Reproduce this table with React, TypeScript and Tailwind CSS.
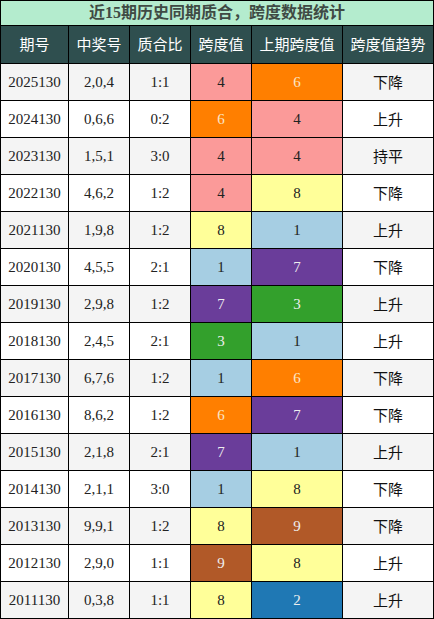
const rows: [string, string, string, number, number, string][] = [
  ["2025130", "2,0,4", "1:1", 4, 6, "下降"],
  ["2024130", "0,6,6", "0:2", 6, 4, "上升"],
  ["2023130", "1,5,1", "3:0", 4, 4, "持平"],
  ["2022130", "4,6,2", "1:2", 4, 8, "下降"],
  ["2021130", "1,9,8", "1:2", 8, 1, "上升"],
  ["2020130", "4,5,5", "2:1", 1, 7, "下降"],
  ["2019130", "2,9,8", "1:2", 7, 3, "上升"],
  ["2018130", "2,4,5", "2:1", 3, 1, "上升"],
  ["2017130", "6,7,6", "1:2", 1, 6, "下降"],
  ["2016130", "8,6,2", "1:2", 6, 7, "下降"],
  ["2015130", "2,1,8", "2:1", 7, 1, "上升"],
  ["2014130", "2,1,1", "3:0", 1, 8, "下降"],
  ["2013130", "9,9,1", "1:2", 8, 9, "下降"],
  ["2012130", "2,9,0", "1:1", 9, 8, "上升"],
  ["2011130", "0,3,8", "1:1", 8, 2, "上升"],
]

// span value -> cell colour + text colour
const spanColor: Record<number, string> = {
  1: "bg-[#a6cee3] text-[#222]",
  2: "bg-[#1f78b4] text-[#eee]",
  3: "bg-[#33a02c] text-[#eee]",
  4: "bg-[#fb9a99] text-[#222]",
  6: "bg-[#ff7f00] text-[#fbe6c8]",
  7: "bg-[#6a3d9a] text-[#eee]",
  8: "bg-[#ffff99] text-[#222]",
  9: "bg-[#b15928] text-[#eee]",
}

const headers = ["期号", "中奖号", "质合比", "跨度值", "上期跨度值", "跨度值趋势"]

const serif = "font-['Liberation_Serif','Noto_Sans_CJK_SC',serif]"
const sans = "font-['Noto_Sans_CJK_SC',sans-serif]"
const cols = "grid grid-cols-[68px_61px_61px_61px_91px_91px]"
const cell = "flex items-center justify-center border-r border-b border-black"

export default function App() {
  return (
    <div className="w-[434px] border-l border-t border-black bg-white">
      {/* Title */}
      <div
        className={`h-[25px] flex items-center justify-center border-r border-b border-black bg-[#b4ecce] text-[#3f4a44] text-[16px] font-bold ${serif}`}
      >
        近15期历史同期质合，跨度数据统计
      </div>

      {/* Header */}
      <div className={`${cols} h-[38px] bg-[#2f4f4f] text-white text-[15px] ${sans}`}>
        {headers.map((h) => (
          <div key={h} className={cell}>
            {h}
          </div>
        ))}
      </div>

      {/* Rows */}
      {rows.map(([issue, nums, ratio, span, prev, trend], i) => (
        <div
          key={issue}
          className={`${cols} h-[37px] text-[15px] text-[#222] ${i % 2 === 0 ? "bg-[#f4f4f4]" : "bg-white"}`}
        >
          <div className={`${cell} ${serif}`}>{issue}</div>
          <div className={`${cell} ${serif}`}>{nums}</div>
          <div className={`${cell} ${serif}`}>{ratio}</div>
          <div className={`${cell} ${serif} ${spanColor[span]}`}>{span}</div>
          <div className={`${cell} ${serif} ${spanColor[prev]}`}>{prev}</div>
          <div className={`${cell} ${sans} text-[#111]`}>{trend}</div>
        </div>
      ))}
    </div>
  )
}
